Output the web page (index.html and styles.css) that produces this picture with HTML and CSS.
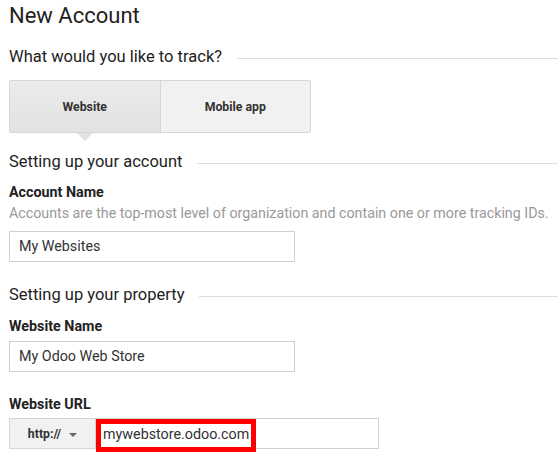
FILE: index.html
```html
<!DOCTYPE html>
<html>
<head>
<meta charset="utf-8">
<link rel="stylesheet" href="styles.css">
</head>
<body>
<div class="page">
  <h1 class="title">New Account</h1>
  <div class="section-head track"><span>What would you like to track?</span><i class="rule"></i></div>
  <div class="toggle">
    <div class="opt active">Website</div>
    <div class="opt">Mobile app</div>
  </div>
  <div class="section-head account"><span>Setting up your account</span><i class="rule"></i></div>
  <div class="label account-label">Account Name</div>
  <div class="help">Accounts are the top-most level of organization and contain one or more tracking IDs.</div>
  <div class="input account-input">My Websites</div>
  <div class="section-head property"><span>Setting up your property</span><i class="rule"></i></div>
  <div class="label site-label">Website Name</div>
  <div class="input site-input">My Odoo Web Store</div>
  <div class="label url-label">Website URL</div>
  <div class="url-row">
    <div class="proto">http:// <span class="caret"></span></div>
    <div class="url-input"><span class="highlight">mywebstore.odoo.com</span></div>
  </div>
</div>
</body>
</html>
```

FILE: styles.css
```css
html, body {
  margin: 0;
  padding: 0;
  background: #fff;
}
.page {
  font-family: Roboto, "Liberation Sans", sans-serif;
  color: #212121;
  padding-left: 9px;
  width: 549px;
  height: 460px;
  overflow: hidden;
}
.title {
  margin: 0;
  padding-top: 3px;
  font-size: 22px;
  font-weight: 400;
  line-height: 26px;
  color: #222;
}
.section-head {
  display: flex;
  align-items: center;
  font-size: 16.5px;
  line-height: 20px;
  color: #222;
}
.section-head .rule {
  flex: 1;
  height: 1px;
  background: #dcdcdc;
  margin-left: 15px;
  margin-top: 2px;
}
.track { margin-top: 18px; }
.toggle {
  display: flex;
  width: 302px;
  height: 53px;
  margin-top: 13px;
  border: 1px solid #d6d6d6;
  box-sizing: border-box;
  border-radius: 2px;
  background: #f1f1f1;
}
.opt {
  flex: 1;
  display: flex;
  align-items: center;
  justify-content: center;
  font-size: 12.3px;
  font-weight: 700;
  color: #333;
}
.opt.active {
  position: relative;
  background: linear-gradient(#ebebeb, #e2e2e2);
  border-right: 1px solid #d6d6d6;
}
.opt.active::after {
  content: "";
  position: absolute;
  left: 50%;
  bottom: -9px;
  margin-left: -8px;
  border-left: 8px solid transparent;
  border-right: 8px solid transparent;
  border-top: 8px solid #e2e2e2;
}
.account { margin-top: 19px; }
.label {
  font-size: 14.3px;
  font-weight: 700;
  line-height: 18px;
  color: #222;
}
.account-label { margin-top: 11px; }
.help {
  font-size: 14.25px;
  line-height: 18px;
  color: #999;
  margin-top: 3px;
  white-space: nowrap;
}
.input {
  width: 286px;
  height: 31px;
  box-sizing: border-box;
  border: 1px solid #d0d0d0;
  padding-left: 9px;
  font-size: 14.3px;
  line-height: 29px;
  color: #333;
}
.account-input { margin-top: 9px; }
.property { margin-top: 23px; }
.site-label { margin-top: 12px; }
.site-input { margin-top: 6px; }
.url-label { margin-top: 23px; }
.url-row {
  display: flex;
  margin-top: 5px;
  height: 31px;
}
.proto {
  width: 86px;
  box-sizing: border-box;
  border: 1px solid #d6d6d6;
  border-right: none;
  background: #f1f1f1;
  display: flex;
  align-items: center;
  justify-content: center;
  font-size: 12.3px;
  font-weight: 700;
  color: #333;
  gap: 8px;
}
.caret {
  width: 0;
  height: 0;
  border-left: 4px solid transparent;
  border-right: 4px solid transparent;
  border-top: 4px solid #666;
  margin-top: 2px;
}
.url-input {
  width: 284px;
  box-sizing: border-box;
  border: 1px solid #d0d0d0;
  position: relative;
}
.highlight {
  position: absolute;
  left: 0;
  top: 0;
  height: 33px;
  width: 160px;
  box-sizing: border-box;
  border: 5px solid #ff0000;
  padding-left: 2px;
  font-size: 14.3px;
  line-height: 21px;
  color: #333;
  background: #fff;
}
```
